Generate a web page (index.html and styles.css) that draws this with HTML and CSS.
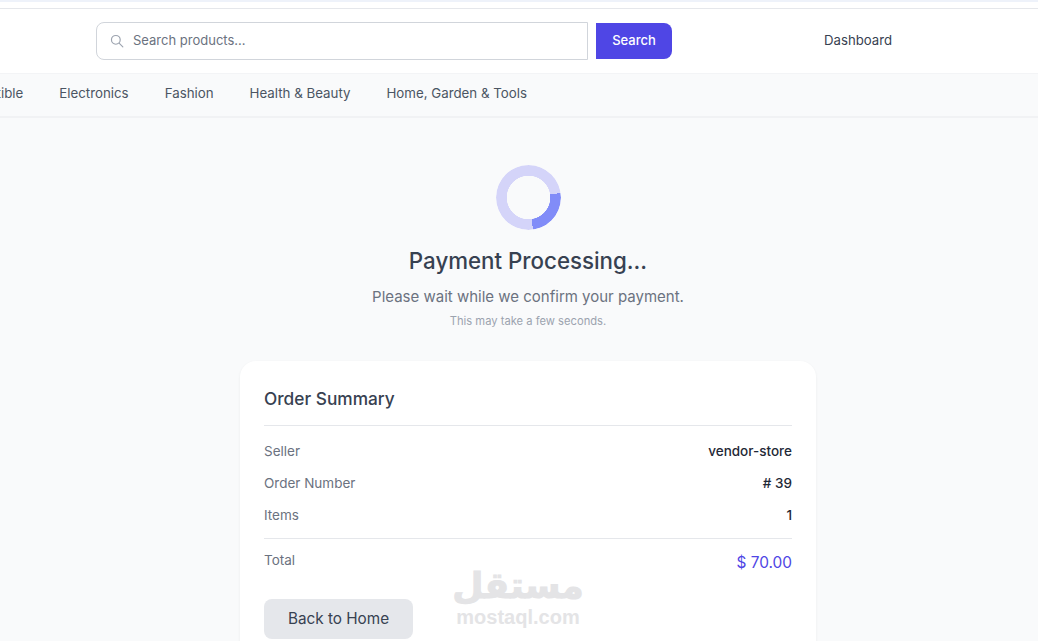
FILE: index.html
```html
<!DOCTYPE html>
<html lang="en">
<head>
  <meta charset="UTF-8">
  <meta name="viewport" content="width=device-width, initial-scale=1.0">
  <title>Payment Processing</title>
  <link rel="stylesheet" href="styles.css">
</head>
<body>
  <div class="top-strip"></div>
  <header class="site-header">
    <form class="search-form">
      <div class="search-box">
        <svg class="search-icon" width="14" height="14" viewBox="0 0 24 24" fill="none" stroke="#9ca3af" stroke-width="2" stroke-linecap="round">
          <circle cx="10" cy="10" r="7.5"></circle>
          <path d="M16 16l6 6"></path>
        </svg>
        <span class="search-placeholder">Search products...</span>
      </div>
      <button type="button" class="search-button">Search</button>
    </form>
    <a class="dashboard-link">Dashboard</a>
  </header>

  <div class="category-bar">
    <nav class="category-nav">
      <a>Collectible</a>
      <a>Electronics</a>
      <a>Fashion</a>
      <a>Health &amp; Beauty</a>
      <a>Home, Garden &amp; Tools</a>
    </nav>
  </div>

  <main class="status-page">
    <div class="spinner"></div>
    <h1>Payment Processing...</h1>
    <p class="status-text">Please wait while we confirm your payment.</p>
    <p class="status-note">This may take a few seconds.</p>

    <section class="summary-card">
      <h2>Order Summary</h2>
      <div class="summary-rows">
        <div class="summary-row"><span>Seller</span><strong>vendor-store</strong></div>
        <div class="summary-row"><span>Order Number</span><strong># 39</strong></div>
        <div class="summary-row"><span>Items</span><strong>1</strong></div>
      </div>
      <div class="summary-total">
        <span>Total</span>
        <strong>$ 70.00</strong>
      </div>
      <button type="button" class="home-button">Back to Home</button>
    </section>
  </main>

  <div class="watermark">
    <span class="watermark-ar" lang="ar" dir="rtl">مستقل</span>
    <span class="watermark-en">mostaql.com</span>
  </div>
</body>
</html>
```

FILE: styles.css
```css
/* General Styles */
* {
  box-sizing: border-box;
}

html,
body {
  height: 100%;
}

body {
  font-family: 'Inter', 'Noto Sans', sans-serif;
  margin: 0;
  background: #f9fafb;
  color: #374151;
  overflow: hidden;
  position: relative;
}

.top-strip {
  height: 8px;
  background: linear-gradient(#eef2fa 0 2px, #fff 2px);
}

/* Header */
.site-header {
  height: 65px;
  background: #fff;
  border-top: 1px solid #e5e7eb;
  display: flex;
  align-items: center;
  padding-left: 96px;
}

.search-form {
  display: flex;
  align-items: center;
  gap: 8px;
}

.search-box {
  width: 492px;
  height: 38px;
  border: 1px solid #d1d5db;
  border-radius: 8px 0 0 8px;
  display: flex;
  align-items: center;
  gap: 9px;
  padding-left: 13px;
}

.search-placeholder {
  font-size: 13px;
  color: #6b7280;
  padding-bottom: 2px;
}

.search-button {
  width: 76px;
  height: 36px;
  border: none;
  background: #4f46e5;
  color: #fff;
  font-family: inherit;
  font-size: 13px;
  font-weight: 500;
  padding-bottom: 3px;
  border-radius: 0 8px 8px 0;
}

.dashboard-link {
  margin-left: 152px;
  font-size: 13.2px;
  color: #374151;
  padding-bottom: 2px;
}

/* Categories */
.category-bar {
  height: 45px;
  border-top: 1px solid #f3f4f6;
  border-bottom: 2px solid #f1f2f4;
}

.category-nav {
  width: 527px;
  height: 100%;
  padding-bottom: 5px;
  display: flex;
  align-items: center;
  justify-content: flex-end;
  gap: 36px;
  white-space: nowrap;
  font-size: 13.3px;
  color: #4b5563;
}

/* Status */
.status-page {
  display: flex;
  flex-direction: column;
  align-items: center;
  padding: 47px 0 0 18px;
}

.spinner {
  width: 65px;
  height: 65px;
  border-radius: 50%;
  background: conic-gradient(from 82deg, #818cf8 0 90deg, #d4d4f9 90deg);
  -webkit-mask: radial-gradient(circle, transparent 0 21.5px, #000 22px);
  mask: radial-gradient(circle, transparent 0 21.5px, #000 22px);
}

h1 {
  font-size: 22.3px;
  font-weight: 500;
  line-height: 32px;
  margin: 15px 0 0;
  color: #374151;
}

.status-text {
  font-size: 15px;
  line-height: 24px;
  margin: 8px 0 0;
  color: #6b7280;
}

.status-note {
  font-size: 11.2px;
  line-height: 16px;
  margin: 4px 0 0;
  color: #9ca3af;
}

/* Order summary */
.summary-card {
  width: 576px;
  height: 400px;
  margin-top: 32px;
  padding: 24px;
  background: #fff;
  border-radius: 16px;
  box-shadow: 0 1px 3px rgba(0, 0, 0, 0.06);
  flex-shrink: 0;
}

h2 {
  font-size: 17.3px;
  font-weight: 500;
  line-height: 28px;
  margin: 0;
  padding-bottom: 12px;
  color: #374151;
  border-bottom: 1px solid #e5e7eb;
}

.summary-rows {
  padding: 9px 0 7px;
  border-bottom: 1px solid #e5e7eb;
}

.summary-row {
  display: flex;
  justify-content: space-between;
  align-items: center;
  height: 32px;
  font-size: 13.5px;
  color: #6b7280;
}

.summary-row strong {
  font-weight: 500;
  color: #1f2937;
}

.summary-total {
  display: flex;
  justify-content: space-between;
  padding-top: 11px;
  font-size: 13.5px;
  color: #6b7280;
}

.summary-total span {
  line-height: 20px;
}

.summary-total strong {
  font-size: 15.4px;
  font-weight: 400;
  line-height: 26px;
  color: #4f46e5;
}

.home-button {
  display: block;
  width: 149px;
  height: 40px;
  margin-top: 23px;
  border: none;
  border-radius: 8px;
  background: #e5e7eb;
  color: #374151;
  font-family: inherit;
  font-size: 15.3px;
  font-weight: 400;
  padding-bottom: 3px;
}

/* Watermark over the page */
.watermark {
  position: absolute;
  left: 455px;
  top: 565px;
  width: 126px;
  display: flex;
  flex-direction: column;
  align-items: center;
  color: #e4e4e6;
  font-family: 'DejaVu Sans', sans-serif;
  font-weight: 700;
  pointer-events: none;
}

.watermark-ar {
  font-size: 36px;
  line-height: 42px;
  -webkit-text-stroke: 1px #e4e4e6;
}

.watermark-en {
  font-family: 'Liberation Sans', sans-serif;
  font-size: 20px;
  line-height: 20px;
}
```
